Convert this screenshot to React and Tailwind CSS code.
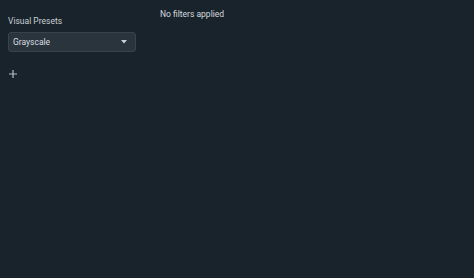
import React from "react";

export default function App() {
  return (
    <div
      className="w-[474px] h-[278px] bg-[#18232c] flex text-[#d5dadf]"
      style={{ fontFamily: "Roboto, 'Liberation Sans', sans-serif" }}
    >
      <div className="w-[128px] ml-[8px] pt-[15px] flex flex-col">
        <div className="text-[8.5px] leading-[12px] text-[#c9cfd4]">Visual Presets</div>
        <div className="mt-[5px] h-[20px] rounded-[3px] bg-[#2a343c] border border-[#39434b] flex items-center justify-between pl-[4px] pr-[8px]">
          <span className="text-[8.5px] text-[#d9dde1]">Grayscale</span>
          <svg width="6" height="4" viewBox="0 0 6 4">
            <path d="M0 0 L6 0 L3 3.5 Z" fill="#c9cfd4" />
          </svg>
        </div>
        <div className="mt-[18px] ml-[1px]">
          <svg width="8" height="8" viewBox="0 0 8 8">
            <path d="M4 0 V8 M0 4 H8" stroke="#b7bec4" strokeWidth="1.2" />
          </svg>
        </div>
      </div>
      <div className="ml-[24px] pt-[8px]">
        <div className="text-[8.5px] leading-[12px] text-[#d5dadf]">No filters applied</div>
      </div>
    </div>
  );
}
